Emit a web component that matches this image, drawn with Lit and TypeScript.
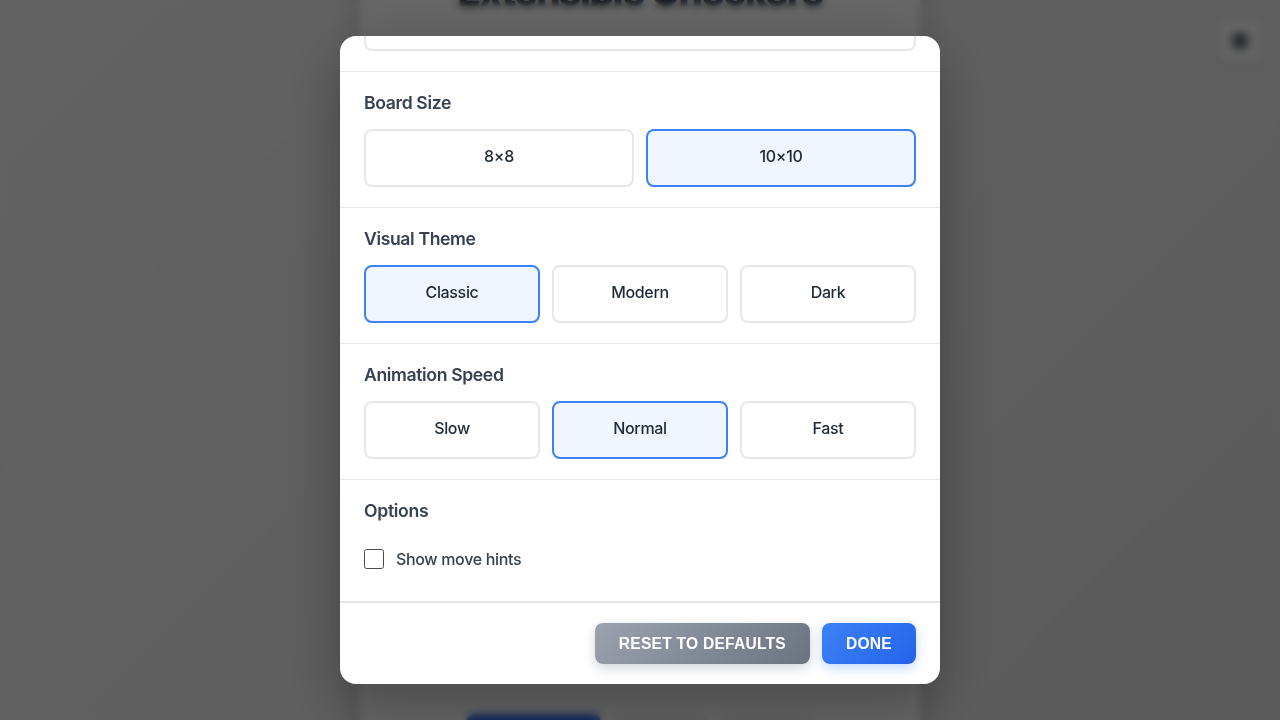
import { LitElement, html, css } from "lit";
import { customElement, property, state } from "lit/decorators.js";

@customElement("option-group")
class OptionGroup extends LitElement {
  @property() heading = "";
  @property({ attribute: false }) options: string[] = [];
  @property() selected = "";

  static styles = css`
    :host { display: block; padding: 20px 24px; border-bottom: 1px solid #e5e7eb; }
    .heading { margin: 0 0 12px; height: 25px; line-height: 22px; font-size: 17.6px; font-weight: 600; color: #374151; letter-spacing: -0.37px; }
    .row { display: flex; gap: 12px; }
    .option { flex: 1 1 0; height: 58px; box-sizing: border-box; border: 2px solid #e5e7eb; border-radius: 8px; background: #fff; padding: 12px 16px; text-align: center; font-size: 16px; line-height: 26px; font-weight: 500; color: #1f2937; letter-spacing: -0.35px; cursor: pointer; }
    .selected { border-color: #3b82f6; background: #eff6ff; }
  `;

  render() {
    return html`
      <h3 class="heading">${this.heading}</h3>
      <div class="row">
        ${this.options.map(
          (o) => html`<div class="option ${o === this.selected ? "selected" : ""}" @click=${() => (this.selected = o)}>${o}</div>`
        )}
      </div>
    `;
  }
}

@customElement("app-root")
class AppRoot extends LitElement {
  @state() hints = false;

  static styles = css`
    :host { display: block; position: relative; width: 1280px; height: 720px; overflow: hidden; font-family: Inter, "Liberation Sans", sans-serif; }
    .page { height: 720px; display: flex; justify-content: center; background: linear-gradient(135deg, #f5f5f5 0%, #e5e5e5 100%); }
    .game { width: 560px; height: 900px; margin-top: -40px; background: #fff; box-shadow: 0 8px 32px rgba(0, 0, 0, 0.15); display: flex; flex-direction: column; align-items: center; }
    .title { margin: 0; padding-top: 12px; height: 38px; line-height: 40px; font-size: 38px; font-weight: 800; color: #1f2937; letter-spacing: -1.1px; white-space: nowrap; }
    .controls { margin-top: 704px; width: 348px; display: flex; gap: 12px; }
    .control { height: 41px; flex: 1; border-radius: 8px; background: #eef0f2; }
    .primary { flex: 0 0 135px; background: #2563eb; }
    .gear { position: absolute; top: 21px; right: 20px; width: 40px; height: 40px; display: grid; place-items: center; border-radius: 8px; background: #fbfbfb; box-shadow: 0 2px 8px rgba(0, 0, 0, 0.08); }
    .overlay { position: absolute; inset: 0; display: flex; align-items: center; justify-content: center; background: rgba(0, 0, 0, 0.6); backdrop-filter: blur(4px); }
    .modal { width: 600px; height: 648px; overflow: hidden; border-radius: 16px; background: #fff; box-shadow: 0 20px 60px rgba(0, 0, 0, 0.3); display: flex; flex-direction: column; }
    .mode { padding: 0 24px 20px; border-bottom: 1px solid #e5e7eb; }
    .mode-card { height: 13px; border: 2px solid #e5e7eb; border-top: 0; border-radius: 0 0 8px 8px; }
    .extras { flex: 1; padding: 20px 24px; }
    .heading { margin: 0; line-height: 22px; font-size: 17.6px; font-weight: 600; color: #374151; letter-spacing: -0.3px; }
    .check { display: flex; align-items: center; gap: 12px; height: 26px; margin-top: 24px; font-size: 16px; font-weight: 500; color: #374151; letter-spacing: -0.33px; }
    .check input { appearance: none; box-sizing: border-box; width: 20px; height: 20px; margin: 0; border: 1px solid #4b4b4b; border-radius: 2.5px; background: #fff; }
    .check input:checked { background: #3b82f6; }
    .footer { display: flex; justify-content: flex-end; gap: 12px; padding: 20px 24px; border-top: 2px solid #e5e7eb; }
    .button { height: 41px; padding: 0 24px; border: 0; border-radius: 8px; color: #fff; font: 700 15.6px "Liberation Sans", Arial, sans-serif; letter-spacing: 0.24px; text-transform: uppercase; }
    .reset { background: linear-gradient(135deg, #9ca3af, #6b7280); box-shadow: 0 4px 12px rgba(107, 114, 128, 0.3); }
    .done { background: linear-gradient(135deg, #3b82f6, #2563eb); box-shadow: 0 4px 12px rgba(59, 130, 246, 0.3); }
  `;

  render() {
    return html`
      <div class="page">
        <div class="game">
          <h1 class="title">Extensible Checkers</h1>
          <div class="controls">
            <div class="control primary"></div>
            <div class="control"></div>
            <div class="control"></div>
          </div>
        </div>
        <div class="gear">
          <svg width="20" height="20" viewBox="0 0 20 20"><circle cx="10" cy="10" r="6.5" fill="#7b818b" stroke="#4b5563" stroke-width="4"/></svg>
        </div>
      </div>
      <div class="overlay">
        <div class="modal">
          <div class="mode"><div class="mode-card"></div></div>
          <option-group heading="Board Size" .options=${["8×8", "10×10"]} selected="10×10"></option-group>
          <option-group heading="Visual Theme" .options=${["Classic", "Modern", "Dark"]} selected="Classic"></option-group>
          <option-group heading="Animation Speed" .options=${["Slow", "Normal", "Fast"]} selected="Normal"></option-group>
          <div class="extras">
            <h3 class="heading">Options</h3>
            <label class="check"><input type="checkbox" .checked=${this.hints} />Show move hints</label>
          </div>
          <div class="footer">
            <button class="button reset">Reset to Defaults</button>
            <button class="button done">Done</button>
          </div>
        </div>
      </div>
    `;
  }
}
